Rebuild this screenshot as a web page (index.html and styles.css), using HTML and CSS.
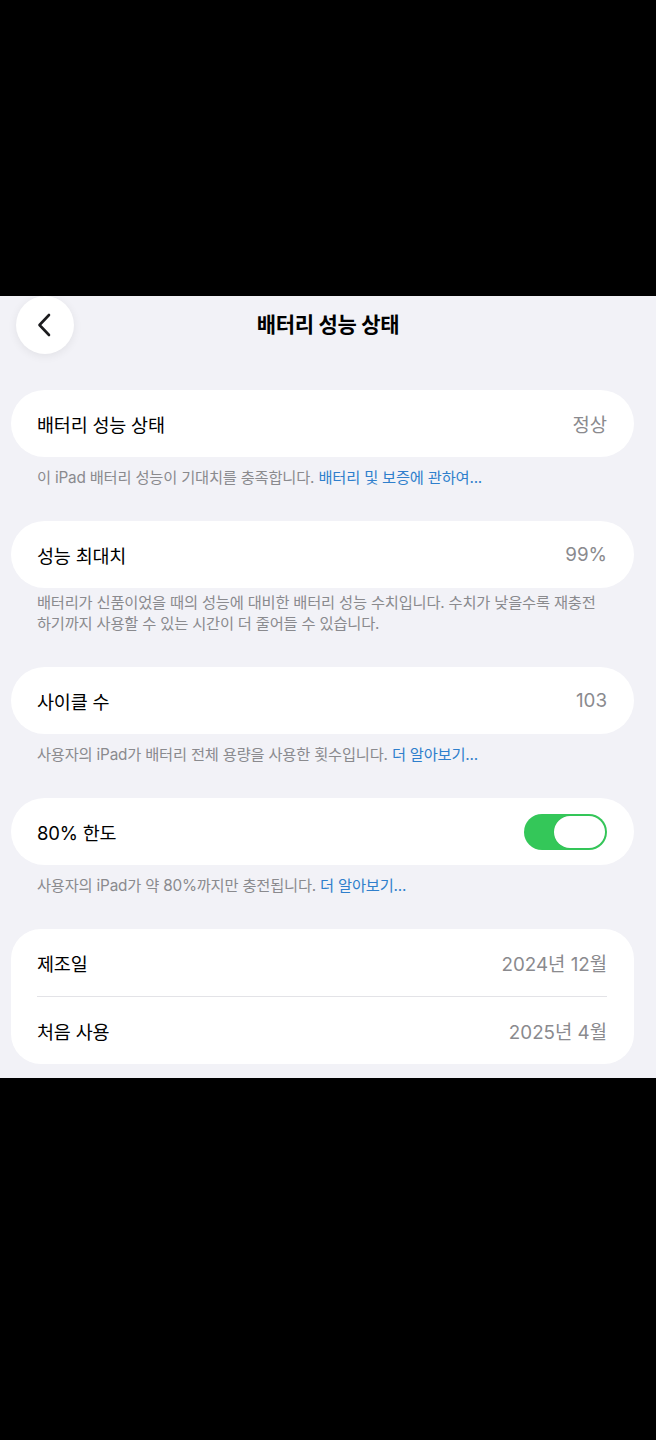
FILE: index.html
```html
<!DOCTYPE html>
<html lang="ko">
<head>
<meta charset="utf-8">
<title>배터리 성능 상태</title>
<link rel="stylesheet" href="styles.css">
</head>
<body>
<div class="black-top"></div>
<main class="screen">
  <header class="nav">
    <button class="back" aria-label="뒤로">
      <svg width="14" height="24" viewBox="0 0 14 24"><path d="M12 2 L2.5 12 L12 22" fill="none" stroke="#1c1c1e" stroke-width="2.6" stroke-linecap="round" stroke-linejoin="round"/></svg>
    </button>
    <h1 class="title">배터리 성능 상태</h1>
  </header>

  <section class="card first">
    <div class="row"><span class="label">배터리 성능 상태</span><span class="value">정상</span></div>
  </section>
  <p class="footer">이 iPad 배터리 성능이 기대치를 충족합니다. <span class="link">배터리 및 보증에 관하여...</span></p>

  <section class="card">
    <div class="row"><span class="label">성능 최대치</span><span class="value">99%</span></div>
  </section>
  <p class="footer multi">배터리가 신품이었을 때의 성능에 대비한 배터리 성능 수치입니다. 수치가 낮을수록 재충전<br>하기까지 사용할 수 있는 시간이 더 줄어들 수 있습니다.</p>

  <section class="card">
    <div class="row"><span class="label">사이클 수</span><span class="value">103</span></div>
  </section>
  <p class="footer">사용자의 iPad가 배터리 전체 용량을 사용한 횟수입니다. <span class="link">더 알아보기...</span></p>

  <section class="card">
    <div class="row"><span class="label">80% 한도</span><span class="toggle"><span class="knob"></span></span></div>
  </section>
  <p class="footer">사용자의 iPad가 약 80%까지만 충전됩니다. <span class="link">더 알아보기...</span></p>

  <section class="card group">
    <div class="row"><span class="label">제조일</span><span class="value">2024년 12월</span></div>
    <div class="sep"></div>
    <div class="row"><span class="label">처음 사용</span><span class="value">2025년 4월</span></div>
  </section>
</main>
</body>
</html>
```

FILE: styles.css
```css
html, body {
  margin: 0;
  padding: 0;
  background: #000;
}
body {
  width: 656px;
  height: 1440px;
  overflow: hidden;
  font-family: "Inter", "Noto Sans CJK KR", sans-serif;
  color: #000;
}
.black-top {
  height: 296px;
  background: #000;
}
.screen {
  height: 782px;
  background: #f2f2f7;
  display: flex;
  flex-direction: column;
  overflow: hidden;
}
.nav {
  height: 58px;
  display: flex;
  align-items: center;
  position: relative;
}
.back {
  width: 58px;
  height: 58px;
  margin-left: 16px;
  border: none;
  border-radius: 50%;
  background: #fff;
  box-shadow: 0 2px 10px rgba(0, 0, 0, 0.07);
  display: flex;
  align-items: center;
  justify-content: center;
  padding: 0 3px 0 0;
  position: relative;
  z-index: 1;
}
.title {
  position: absolute;
  left: 0;
  right: 0;
  top: 0;
  height: 58px;
  line-height: 58px;
  margin: 0;
  text-align: center;
  font-size: 21px;
  font-weight: 700;
  letter-spacing: -0.3px;
  color: #000;
}
.card {
  background: #fff;
  margin: 33px 22px 0 11px;
  border-radius: 34px;
}
.card.first {
  margin-top: 36px;
}
.card.group {
  border-radius: 30px;
}
.row {
  height: 67px;
  display: flex;
  align-items: center;
  justify-content: space-between;
  padding: 0 27px 0 26px;
}
.label {
  font-size: 18.5px;
  letter-spacing: -0.2px;
  color: #000;
}
.value {
  font-size: 18.8px;
  letter-spacing: 0;
  color: #8a8a8e;
}
.sep {
  height: 1px;
  background: #e3e3e7;
  margin: 0 27px 0 26px;
}
.footer {
  margin: 11px 22px 0 37px;
  font-size: 15.3px;
  line-height: 20px;
  letter-spacing: -0.2px;
  color: #8a8a8e;
}
.footer.multi {
  margin-top: 4px;
  line-height: 21px;
}
.link {
  color: #2f7fcc;
}
.toggle {
  width: 83px;
  height: 36px;
  border-radius: 18px;
  background: #34c759;
  display: flex;
  align-items: center;
  justify-content: flex-end;
  padding: 0 2px;
  box-sizing: border-box;
}
.knob {
  width: 51px;
  height: 32px;
  border-radius: 16px;
  background: #fff;
  box-shadow: 0 0 1px rgba(0, 0, 0, 0.15);
}
```
